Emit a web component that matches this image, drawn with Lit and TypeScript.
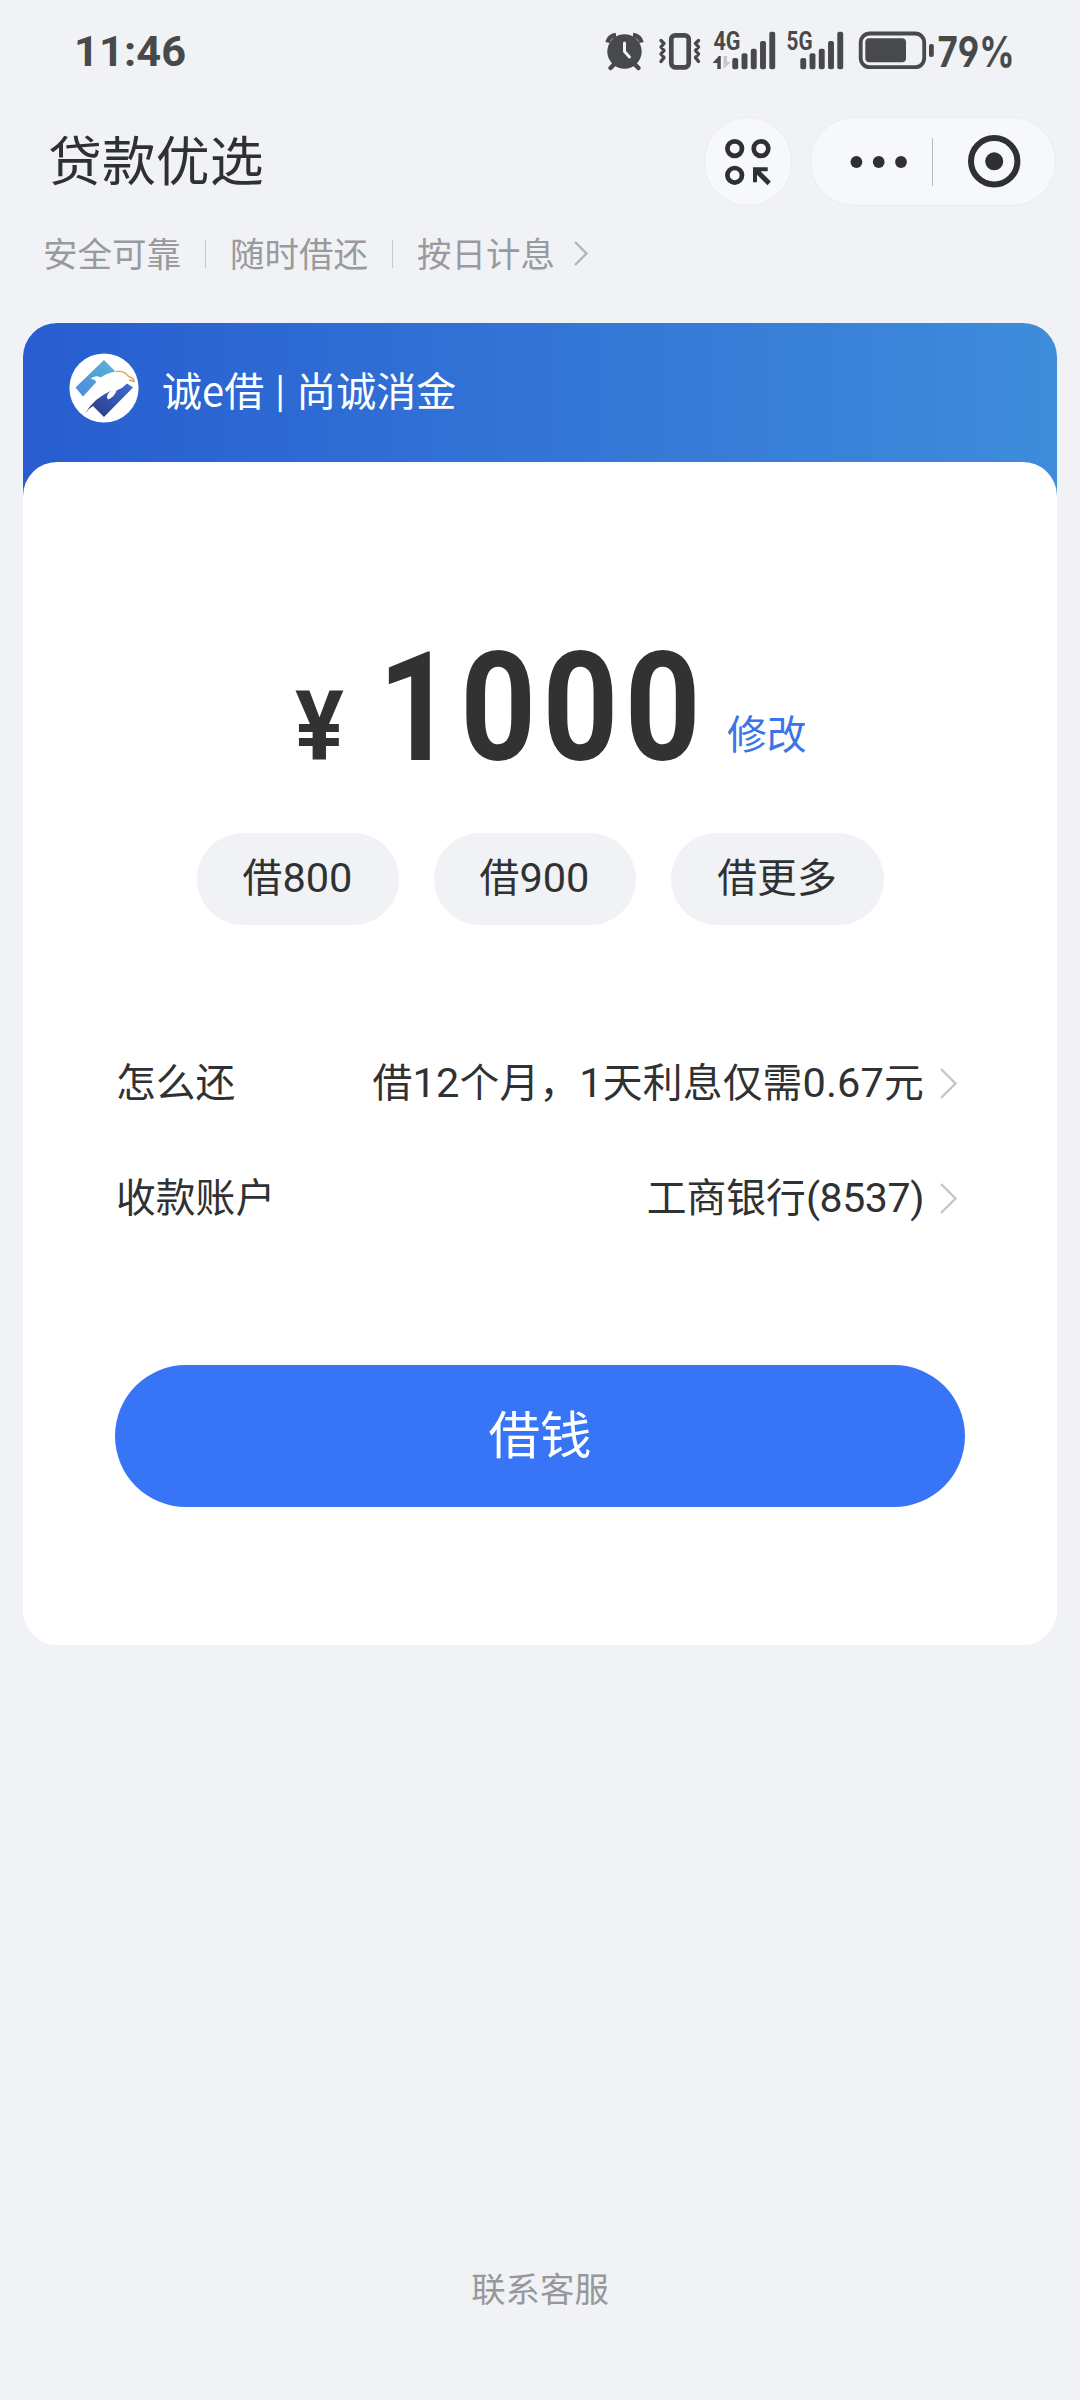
import { LitElement, html, css, svg } from "lit";
import { customElement, property } from "lit/decorators.js";

const bars = (x: number) => {
  const tops = [58, 53.3, 48.7, 41, 31.7];
  return tops.map(
    (t, i) => svg`<rect x=${x + i * 9.25} y=${t - 30} width="5.9" height=${69.2 - t} rx="2"></rect>`
  );
};

@customElement("status-bar")
class StatusBar extends LitElement {
  static styles = css`
    :host {
      display: flex;
      height: 100px;
      box-sizing: border-box;
      padding: 10px 56px 0 65px;
      justify-content: space-between;
      align-items: flex-start;
      color: #48494b;
    }
    svg {
      display: block;
      fill: #48494b;
      overflow: visible;
    }
    .label {
      font-family: Inter, Roboto, sans-serif;
      font-weight: 700;
      font-feature-settings: "ss01";
    }
    .time {
      font-family: Roboto, sans-serif;
      font-weight: 700;
    }
    .net {
      font-family: Roboto, sans-serif;
      font-weight: 700;
      font-size: 25px;
    }
    .line {
      fill: none;
      stroke: #48494b;
    }
    .hand {
      fill: none;
      stroke: #f1f2f6;
      stroke-width: 3;
      stroke-linecap: round;
    }
    .faint {
      fill: #c6c7ca;
    }
  `;
  render() {
    return html`
      <svg width="140" height="80" viewBox="65 10 140 80">
        <text class="time" x="74" y="66.4" font-size="43.3" textLength="112" lengthAdjust="spacing">11:46</text>
      </svg>
      <svg width="434" height="80" viewBox="590 -20 434 80">
        <g>
          <circle cx="624.5" cy="21.5" r="17.2"></circle>
          <path class="line" stroke-width="4.6" d="M607.5 12.5Q609 6 616 5M641.5 12.5Q640 6 633 5"></path>
          <path class="line" stroke-width="4.5" stroke-linecap="round" d="M614.5 34L610.5 38M634.5 34L638.5 38"></path>
          <path class="hand" d="M624.5 13V21.5L629.5 27"></path>
        </g>
        <g>
          <rect class="line" x="671.3" y="5.3" width="17.4" height="32" rx="4" stroke-width="4.7"></rect>
          <path class="line" stroke-width="3.4" stroke-linejoin="round" stroke-linecap="round"
            d="M661 10.5L664 13.5L661 17L664 20.5L661 24L664 27.5L661 31.5M698.5 10.5L695.5 13.5L698.5 17L695.5 20.5L698.5 24L695.5 27.5L698.5 31.5"></path>
        </g>
        <text class="net" x="713.5" y="20.3" textLength="27" lengthAdjust="spacingAndGlyphs">4G</text>
        <path d="M712.5 33L718.5 26.5V26H720.8V39H717.3V33Z"></path>
        <path class="faint" d="M723.5 26H727V32H731L723.5 39Z"></path>
        ${bars(732.3)}
        <text class="net" x="786.5" y="20.3" textLength="26" lengthAdjust="spacingAndGlyphs">5G</text>
        ${bars(800.3)}
        <rect class="line" x="860.7" y="3.5" width="63.5" height="33.7" rx="9" stroke-width="3.8"></rect>
        <rect x="865.3" y="8.3" width="40.7" height="24" rx="4"></rect>
        <rect x="929" y="14" width="4.8" height="13" rx="2"></rect>
        <text class="label" x="937.5" y="36.8" font-size="42.8" textLength="77" lengthAdjust="spacingAndGlyphs">79%</text>
      </svg>
    `;
  }
}

@customElement("nav-bar")
class NavBar extends LitElement {
  static styles = css`
    :host {
      display: flex;
      height: 123px;
      align-items: center;
      padding: 0 24px 0 48px;
      color: #2f3032;
    }
    h1 {
      flex: 1;
      margin: 0;
      padding-bottom: 8px;
      font-size: 53.9px;
      font-weight: 400;
      line-height: 70px;
    }
    .round,
    .pill {
      box-sizing: border-box;
      height: 89px;
      border: 1px solid #ecedef;
      border-radius: 45px;
      background: #f7f8fa;
    }
    .round {
      width: 88px;
      margin-right: 18px;
    }
    .pill {
      width: 246px;
    }
    svg {
      display: block;
      margin: -1px;
    }
    .ring {
      fill: none;
      stroke: #2f3032;
    }
    .solid {
      fill: #2f3032;
    }
    .rule {
      fill: #b9babd;
    }
  `;
  render() {
    return html`
      <h1>贷款优选</h1>
      <div class="round">
        <svg width="88" height="89" viewBox="704 117 88 89">
          <g class="ring" stroke-width="4.7">
            <circle cx="734.7" cy="148.6" r="7.3"></circle>
            <circle cx="761" cy="148.6" r="7.3"></circle>
            <circle cx="734.7" cy="175.3" r="7.3"></circle>
          </g>
          <path class="solid" d="M753 167.3H767.7V171.3H760.6L770.8 181.5L767.5 185.2L757 174.8V182.3H753Z"></path>
        </svg>
      </div>
      <div class="pill">
        <svg width="246" height="89" viewBox="810 117 246 89">
          <g class="solid">
            <circle cx="856.4" cy="162" r="5.9"></circle>
            <circle cx="878.7" cy="162" r="5.9"></circle>
            <circle cx="901" cy="162" r="5.9"></circle>
            <circle cx="994.2" cy="161.3" r="9"></circle>
          </g>
          <rect class="rule" x="932" y="138" width="1" height="48"></rect>
          <circle class="ring" cx="994.2" cy="161.3" r="23.2" stroke-width="6"></circle>
        </svg>
      </div>
    `;
  }
}

@customElement("chevron-icon")
class ChevronIcon extends LitElement {
  @property({ type: Number }) w = 17;
  @property({ type: Number }) h = 31;
  static styles = css`
    :host {
      display: block;
    }
    svg {
      display: block;
      overflow: visible;
      fill: none;
      stroke: currentColor;
      stroke-width: 2.4;
    }
  `;
  render() {
    return html`<svg width=${this.w} height=${this.h}>
      <path d="M1 1L${this.w - 1.5} ${this.h / 2}L1 ${this.h - 1}"></path>
    </svg>`;
  }
}

@customElement("app-root")
class AppRoot extends LitElement {
  static styles = css`
    :host {
      display: flex;
      flex-direction: column;
      width: 1080px;
      height: 2400px;
      box-sizing: border-box;
      background: #f1f2f6;
      color: #303132;
      font-family: "Noto Sans CJK SC", sans-serif;
      font-size: 39.8px;
      line-height: 60px;
      overflow: hidden;
    }
    .tags {
      display: flex;
      align-items: center;
      height: 57px;
      padding-left: 43px;
      font-size: 34.5px;
      line-height: 54px;
      color: #999a9d;
    }
    .tags span {
      width: 137px;
      white-space: nowrap;
    }
    .tags i {
      width: 1px;
      height: 28px;
      margin: 4px 24px 0 25px;
      background: #c6c7cb;
    }
    .tags chevron-icon {
      margin: 4px 0 0 20px;
      color: #b4b5b8;
    }
    .card {
      margin: 43px 23px 0;
      border-radius: 34px;
      background: linear-gradient(90deg, #275dd0, #3f8cdb) no-repeat 0 0 / 100% 180px;
    }
    .brand {
      display: flex;
      align-items: center;
      height: 139px;
      padding-left: 46px;
      color: #fff;
    }
    .brand svg {
      display: block;
      margin: -10px 23px 0 0;
    }
    .brand p {
      display: flex;
      align-items: center;
      margin: 0 0 8px;
      font-size: 40px;
    }
    .bar {
      width: 32px;
      font-size: 33px;
      font-weight: 500;
      text-align: center;
    }
    .body {
      box-sizing: border-box;
      height: 1183px;
      padding: 178px 92px 0;
      border-radius: 34px;
      background: #fff;
    }
    .amount {
      display: flex;
      align-items: baseline;
      box-sizing: border-box;
      height: 130px;
      padding: 3px 0 0 180px;
      line-height: 130px;
      color: #323232;
      font-family: Roboto, sans-serif;
      font-weight: 700;
      white-space: nowrap;
    }
    .yen {
      width: 83px;
      font-size: 97px;
      transform: translateY(-1px) scaleX(0.94);
      transform-origin: 0 0;
    }
    .sum {
      width: 349px;
      font-size: 152px;
      letter-spacing: 7.3px;
      transform: scaleX(0.87);
      transform-origin: 0 0;
    }
    .edit {
      font: 400 39.8px/60px "Noto Sans CJK SC", sans-serif;
      color: #3b74e7;
      transform: translateY(-11px);
    }
    .chips {
      display: flex;
      justify-content: center;
      gap: 35px;
      margin-top: 63px;
    }
    .chip {
      width: 202px;
      height: 92px;
      border-radius: 46px;
      background: #f1f2f6;
      line-height: 84px;
      text-align: center;
    }
    .chip.wide {
      width: 213px;
    }
    .n {
      font-family: Roboto, sans-serif;
      font-size: 41.5px;
      line-height: 1;
    }
    .rows {
      margin-top: 97px;
    }
    .row {
      display: flex;
      align-items: center;
      height: 115px;
      padding: 0 8px 0 1px;
    }
    .row b {
      flex: 1;
      font-weight: 400;
    }
    .row chevron-icon {
      margin: 8px 0 0 16px;
      color: #c6c6c8;
    }
    .plan {
      letter-spacing: 0.15px;
    }
    .bank .n {
      font-size: 41px;
      letter-spacing: -0.4px;
    }
    .cta {
      height: 142px;
      margin-top: 113px;
      border-radius: 71px;
      background: #3875f6;
      color: #fff;
      font-size: 51.6px;
      line-height: 134px;
      text-align: center;
    }
    .help {
      margin: auto 0 86px;
      font-size: 34.4px;
      line-height: 54px;
      text-align: center;
      color: #97989b;
    }
  `;
  render() {
    return html`
      <status-bar></status-bar>
      <nav-bar></nav-bar>
      <div class="tags">
        <span>安全可靠</span><i></i><span>随时借还</span><i></i><span>按日计息</span>
        <chevron-icon .w=${14} .h=${25}></chevron-icon>
      </div>
      <div class="card">
        <div class="brand">
          <svg width="70" height="70" viewBox="0 0 70 70">
            <defs>
              <linearGradient id="sky" x1="1" y1="0" x2="0" y2="1">
                <stop offset="0" stop-color="#5cb3d6"></stop>
                <stop offset="1" stop-color="#4a8bdc"></stop>
              </linearGradient>
              <linearGradient id="sea" x1="1" y1="0" x2="0" y2="1">
                <stop offset="0" stop-color="#3f6fd6"></stop>
                <stop offset="1" stop-color="#28357f"></stop>
              </linearGradient>
            </defs>
            <circle cx="35" cy="35" r="34.6" fill="#fff"></circle>
            <path fill="url(#sky)" d="M35 7L46.500 18.500Q38 20 31.500 24.500Q26 21.500 21.500 26Q27 26 27 29.500Q21 36 14 43.500L6.500 34.500Z"></path>
            <path fill="url(#sea)" d="M16 60.500Q26 44 43 37.500C38.500 40 37 43 39 46.500Q46 43.500 47.500 37.500Q54 35 58 30.500L64 34.500L35 64L24 53Q19 56 16 60.500Z"></path>
            <path fill="none" stroke="#e2a24b" stroke-width="1.4" d="M47 18.500Q56 17.500 59.500 23.500Q65 25 65 28.500L60 27"></path>
          </svg>
          <p>诚e借<span class="bar">|</span>尚诚消金</p>
        </div>
        <div class="body">
          <div class="amount">
            <span class="yen">¥</span><span class="sum">1000</span><span class="edit">修改</span>
          </div>
          <div class="chips">
            <div class="chip">借<span class="n">800</span></div>
            <div class="chip">借<span class="n">900</span></div>
            <div class="chip wide">借更多</div>
          </div>
          <div class="rows">
            <div class="row">
              <b>怎么还</b>
              <span class="plan">借<span class="n">12</span>个月，<span class="n">1</span>天利息仅需<span class="n">0.67</span>元</span>
              <chevron-icon></chevron-icon>
            </div>
            <div class="row">
              <b>收款账户</b>
              <span class="bank">工商银行<span class="n">(8537)</span></span>
              <chevron-icon></chevron-icon>
            </div>
          </div>
          <div class="cta">借钱</div>
        </div>
      </div>
      <div class="help">联系客服</div>
    `;
  }
}
